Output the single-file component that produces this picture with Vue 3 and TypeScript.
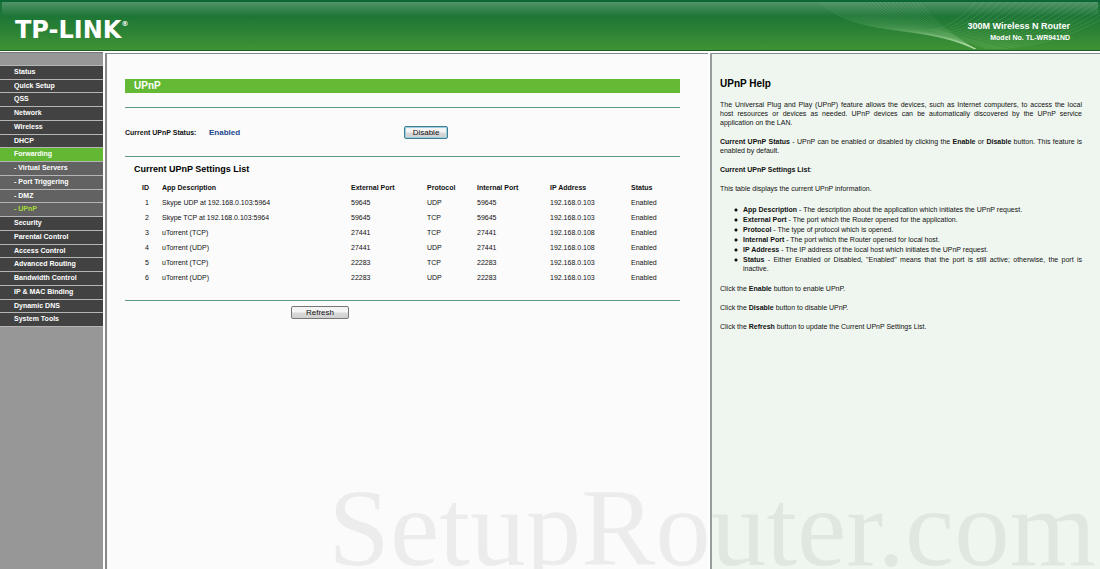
<script setup lang="ts">
interface MenuItem {
  label: string
  sub?: boolean
  active?: boolean
  current?: boolean
}

interface Mapping {
  app: string
  external: string
  protocol: string
  internal: string
  ip: string
}

const menu: MenuItem[] = [
  { label: 'Status' },
  { label: 'Quick Setup' },
  { label: 'QSS' },
  { label: 'Network' },
  { label: 'Wireless' },
  { label: 'DHCP' },
  { label: 'Forwarding', active: true },
  { label: '- Virtual Servers', sub: true },
  { label: '- Port Triggering', sub: true },
  { label: '- DMZ', sub: true },
  { label: '- UPnP', sub: true, current: true },
  { label: 'Security' },
  { label: 'Parental Control' },
  { label: 'Access Control' },
  { label: 'Advanced Routing' },
  { label: 'Bandwidth Control' },
  { label: 'IP & MAC Binding' },
  { label: 'Dynamic DNS' },
  { label: 'System Tools' },
]

const mappings: Mapping[] = [
  { app: 'Skype UDP at 192.168.0.103:5964', external: '59645', protocol: 'UDP', internal: '59645', ip: '192.168.0.103' },
  { app: 'Skype TCP at 192.168.0.103:5964', external: '59645', protocol: 'TCP', internal: '59645', ip: '192.168.0.103' },
  { app: 'uTorrent (TCP)', external: '27441', protocol: 'TCP', internal: '27441', ip: '192.168.0.108' },
  { app: 'uTorrent (UDP)', external: '27441', protocol: 'UDP', internal: '27441', ip: '192.168.0.108' },
  { app: 'uTorrent (TCP)', external: '22283', protocol: 'TCP', internal: '22283', ip: '192.168.0.103' },
  { app: 'uTorrent (UDP)', external: '22283', protocol: 'UDP', internal: '22283', ip: '192.168.0.103' },
]

const terms = [
  { term: 'App Description', text: 'The description about the application which initiates the UPnP request.' },
  { term: 'External Port', text: 'The port which the Router opened for the application.' },
  { term: 'Protocol', text: 'The type of protocol which is opened.' },
  { term: 'Internal Port', text: 'The port which the Router opened for local host.' },
  { term: 'IP Address', text: 'The IP address of the local host which initiates the UPnP request.' },
  { term: 'Status', text: 'Either Enabled or Disabled, "Enabled" means that the port is still active; otherwise, the port is inactive.' },
]

// Two families of thin curves that form the mesh in the banner.
const falling = Array.from({ length: 26 }, (_, i) =>
  `M${20 + i * 4} 0C${60 + i * 2.8} ${38 - i * 0.9} ${125 + i} ${20 + i * 0.5} 181 50`)
const rising = Array.from({ length: 20 }, (_, i) =>
  `M${130 + i * 3} ${28 + i}Q${150 + i * 6} ${28 + i} ${176 + i * 8} 0`)
</script>

<template>
  <div class="page">
    <header class="banner">
      <svg class="mesh" viewBox="0 0 300 47" aria-hidden="true">
        <path v-for="d in falling" :key="d" :d="d" />
        <path v-for="d in rising" :key="d" :d="d" />
      </svg>
      <div class="logo">TP-LINK<span class="reg">®</span></div>
      <div class="model">
        <div class="model-name">300M Wireless N Router</div>
        <div class="model-no">Model No. TL-WR941ND</div>
      </div>
    </header>

    <div class="frames">
      <nav class="side">
        <ul class="menu">
          <li v-for="item in menu" :key="item.label">
            <a href="#" :class="{ sub: item.sub, active: item.active, current: item.current }">{{ item.label }}</a>
          </li>
        </ul>
      </nav>

      <main class="content">
        <h1 class="title">UPnP</h1>
        <div class="status-row">
          <span class="status-label">Current UPnP Status:</span>
          <span class="status-value">Enabled</span>
          <button type="button" class="btn focus">Disable</button>
        </div>
        <h2 class="list-title">Current UPnP Settings List</h2>
        <table class="list">
          <colgroup>
            <col class="c-id" /><col class="c-app" /><col class="c-ext" /><col class="c-proto" />
            <col class="c-int" /><col class="c-ip" /><col />
          </colgroup>
          <thead>
            <tr>
              <th scope="col">ID</th>
              <th scope="col">App Description</th>
              <th scope="col">External Port</th>
              <th scope="col">Protocol</th>
              <th scope="col">Internal Port</th>
              <th scope="col">IP Address</th>
              <th scope="col">Status</th>
            </tr>
          </thead>
          <tbody>
            <tr v-for="(m, i) in mappings" :key="i">
              <td>{{ i + 1 }}</td>
              <td>{{ m.app }}</td>
              <td>{{ m.external }}</td>
              <td>{{ m.protocol }}</td>
              <td>{{ m.internal }}</td>
              <td>{{ m.ip }}</td>
              <td>Enabled</td>
            </tr>
          </tbody>
        </table>
        <div class="actions">
          <button type="button" class="btn wide">Refresh</button>
        </div>
      </main>

      <aside class="help">
        <h2 class="help-title">UPnP Help</h2>
        <p>
          <span class="line">The Universal Plug and Play (UPnP) feature allows the devices, such as Internet computers, to access the local</span>
          <span class="line">host resources or devices as needed. UPnP devices can be automatically discovered by the UPnP service</span>
          application on the LAN.
        </p>
        <p><b>Current UPnP Status</b> - UPnP can be enabled or disabled by clicking the <b>Enable</b> or <b>Disable</b> button. This feature is enabled by default.</p>
        <p><b>Current UPnP Settings List</b>:</p>
        <p>This table displays the current UPnP information.</p>
        <ul class="terms">
          <li v-for="t in terms" :key="t.term"><b>{{ t.term }}</b> - {{ t.text }}</li>
        </ul>
        <p>Click the <b>Enable</b> button to enable UPnP.</p>
        <p>Click the <b>Disable</b> button to disable UPnP.</p>
        <p>Click the <b>Refresh</b> button to update the Current UPnP Settings List.</p>
      </aside>
    </div>
    <div class="watermark">SetupRouter.com</div>
  </div>
</template>

<style>
body {
  margin: 0;
}
</style>

<style scoped>
.page {
  position: relative;
  display: flex;
  flex-direction: column;
  min-height: 100vh;
  overflow: hidden;
  background: #fff;
  color: #111;
  font: 7px/9px "Liberation Sans", Arial, sans-serif;
}
h1, h2, p, ul {
  margin: 0;
  padding: 0;
}
.banner {
  position: relative;
  display: flex;
  justify-content: space-between;
  height: 51px;
  box-sizing: border-box;
  padding: 0 30px 0 15px;
  border-top: 2px solid #0b6836;
  border-bottom: 1px solid #1c5a26;
  background:
    linear-gradient(rgba(255, 255, 255, 0.24), rgba(255, 255, 255, 0)) 2px 0 / calc(100% - 4px) 14px no-repeat,
    linear-gradient(#1a7238 0, #1d7537 13px, #267e35 24px, #3f9335 100%);
  color: #fff;
  font-weight: bold;
}
.mesh {
  position: absolute;
  top: 0;
  right: 0;
  width: 300px;
  height: 47px;
  fill: none;
  stroke: #b9e3b4;
  stroke-opacity: 0.24;
  stroke-width: 0.6;
}
.logo {
  position: relative;
  display: flex;
  padding-top: 16px;
  font: bold 24px/24px "DejaVu Sans", Verdana, sans-serif;
}
.reg {
  padding-top: 2px;
  font-size: 7px;
  line-height: 9px;
}
.model {
  position: relative;
  padding-top: 18px;
  text-align: right;
}
.model-name {
  font-size: 9px;
  line-height: 12px;
}
.model-no {
  line-height: 12px;
}
.frames {
  flex: 1;
  display: grid;
  grid-template-columns: 103px minmax(0, 1fr) 390px;
  padding-top: 1px;
  background: #fff;
}
.side {
  border-top: 1px solid #777;
  background: #979797;
}
.menu {
  display: grid;
  grid-auto-rows: 1fr;
  gap: 1px;
  min-height: 260px;
  margin-top: 12px;
  border-top: 1px solid #b5b5b5;
  border-bottom: 1px solid #b5b5b5;
  background: #b5b5b5;
  list-style: none;
}
.menu li {
  display: flex;
}
.menu a {
  flex: 1;
  padding-left: 14px;
  background: #424242;
  color: #fff;
  font-weight: bold;
  line-height: 12px;
  text-decoration: none;
}
.menu a.sub {
  background: #626262;
}
.menu a.active {
  background: #62b832;
}
.menu a.current {
  color: #a5dc38;
}
.content {
  margin: 1px 2px 0 2px;
  padding: 25px 28px 0 18px;
  border-top: 1px solid #888;
  border-left: 2px solid #888;
  background: #fbfbfb;
}
.title {
  padding-left: 9px;
  background: #64ba34;
  color: #fff;
  font-size: 10px;
  line-height: 14px;
}
.status-row {
  display: flex;
  align-items: center;
  min-height: 47px;
  margin-top: 14px;
  padding-top: 1px;
  border-top: 1px solid #5f9780;
  border-bottom: 1px solid #5f9780;
  font-weight: bold;
}
.status-label {
  width: 84px;
  white-space: nowrap;
}
.status-value {
  width: 195px;
  color: #1c4690;
  font-size: 8px;
}
.btn {
  padding: 0;
  width: 44px;
  height: 13px;
  border: 1px solid #777;
  border-radius: 2px;
  background: linear-gradient(#f4f4f4 45%, #d8d8d8 55%, #d0d0d0);
  color: #111;
  font: 8px/11px "Liberation Sans", Arial, sans-serif;
}
.btn.focus {
  border-color: #3f7e92;
  box-shadow: inset 0 0 0 1px #9cd0de;
}
.btn.wide {
  width: 58px;
}
.list-title {
  padding: 6px 0 5px 9px;
  color: #000;
  font-size: 9px;
  line-height: 12px;
}
.list {
  width: 100%;
  table-layout: fixed;
  border-collapse: collapse;
}
.list th,
.list td {
  height: 15px;
  padding: 0;
  line-height: 15px;
  text-align: left;
  white-space: nowrap;
}
.list th:first-child,
.list td:first-child {
  padding-right: 13px;
  text-align: right;
}
.c-id { width: 37px; }
.c-app { width: 189px; }
.c-ext { width: 76px; }
.c-proto { width: 50px; }
.c-int { width: 73px; }
.c-ip { width: 81px; }
.actions {
  display: flex;
  margin-top: 15px;
  padding: 5px 0 0 166px;
  border-top: 1px solid #5f9780;
}
.help {
  margin-top: 1px;
  padding: 24px 18px 0 8px;
  border-top: 1px solid #888;
  border-left: 2px solid #979d99;
  background: #eff6ef;
  text-align: justify;
}
.help-title {
  padding-bottom: 10px;
  color: #000;
  font-size: 10px;
  line-height: 12px;
}
.help p {
  margin-bottom: 10px;
}
.line {
  display: block;
  text-align-last: justify;
}
.terms {
  margin: 12px 0 10px;
  padding-left: 14px;
  list-style: none;
}
.terms li {
  padding: 0 0 1px 9px;
  background: radial-gradient(circle at 2px 5px, #111 0, #111 1px, transparent 2px) no-repeat;
}
.watermark {
  position: absolute;
  right: 4px;
  bottom: -14px;
  color: rgba(0, 0, 0, 0.06);
  font: 111px/110px "Liberation Serif", "Times New Roman", serif;
  pointer-events: none;
}
</style>
